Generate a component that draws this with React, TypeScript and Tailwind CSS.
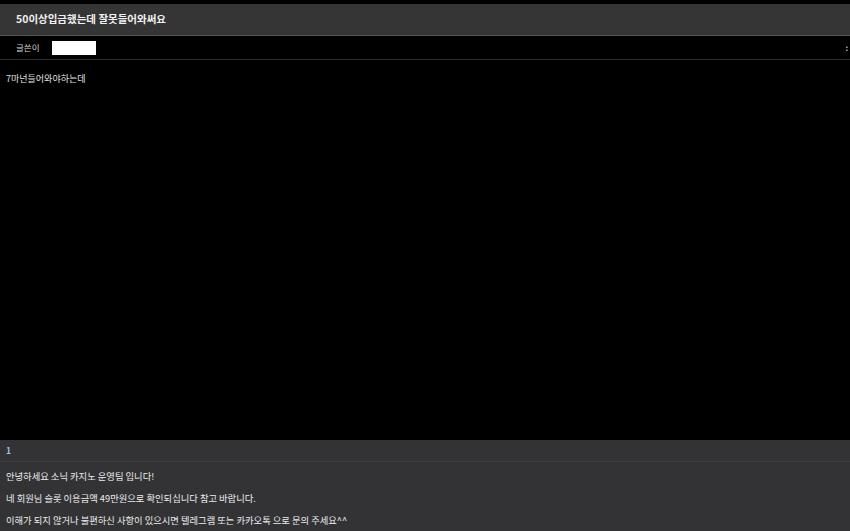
const font = { fontFamily: '"Noto Sans CJK KR", "Noto Sans", sans-serif' };

const App = () => {
  return (
    <div
      className="flex h-[531px] w-[850px] flex-col overflow-hidden bg-black pt-[4px] text-white"
      style={font}
    >
      <header className="flex h-[32px] items-center border-b border-[#555] bg-[#353535] px-[16px]">
        <h1 className="text-[10.5px] font-bold leading-none text-[#f0f0f0]">
          50이상입금했는데 잘못들어와써요
        </h1>
      </header>
      <div className="flex h-[24px] items-center border-b border-[#2c2c2e] px-[16px]">
        <span className="text-[8.5px] leading-none text-[#d8d8d8]">글쓴이</span>
        <span className="ml-[13px] h-[14px] w-[44px] bg-white" />
        <span className="ml-auto -mr-[14px] text-[8px] font-bold leading-none text-[#c8c8ff]">
          :
        </span>
      </div>
      <main className="flex-1 px-[6px] pt-[14px]">
        <p className="text-[9px] leading-none text-[#e0e0e0]">
          7마넌들어와야하는데
        </p>
      </main>
      <section className="h-[91px] bg-[#333336]">
        <div className="flex h-[22px] items-center border-b border-[#3d3d40] px-[6px]">
          <span className="text-[8.5px] font-bold leading-none text-[#8ec4e8]">1</span>
        </div>
        <div className="flex flex-col gap-[13px] px-[6px] pt-[10px] text-[9.3px] leading-[9px] text-[#ececec]">
          <p>안녕하세요 소닉 카지노 운영팀 입니다!</p>
          <p>네 회원님 슬롯 이용금액 49만원으로 확인되십니다 참고 바랍니다.</p>
          <p>이해가 되지 않거나 불편하신 사항이 있으시면 텔레그램 또는 카카오톡 으로 문의 주세요^^</p>
        </div>
      </section>
    </div>
  );
};

export default App;
